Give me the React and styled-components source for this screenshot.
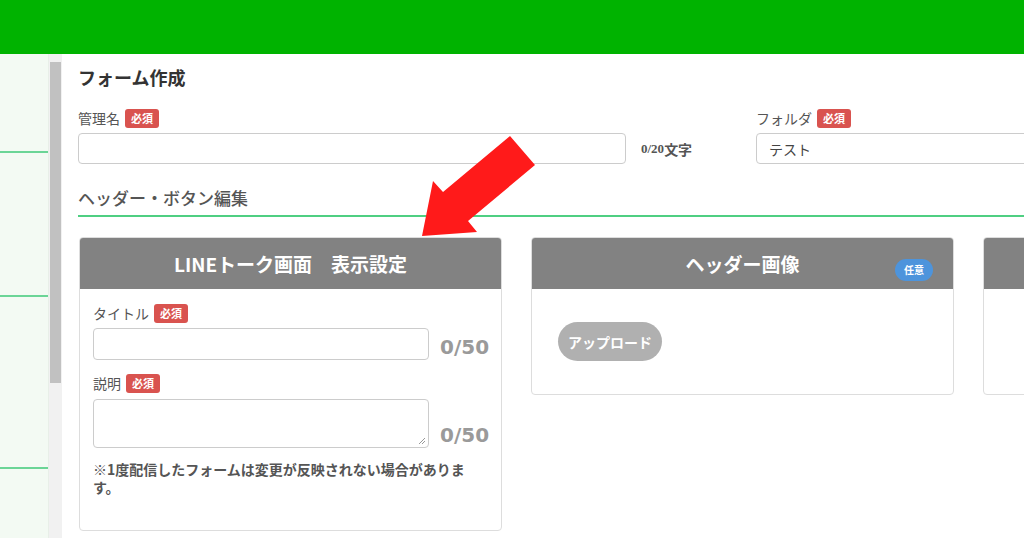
import React from 'react';
import styled, { createGlobalStyle } from 'styled-components';

const GlobalStyle = createGlobalStyle`
  html, body {
    margin: 0;
    padding: 0;
    background: #fff;
    overflow: hidden;
  }
  body {
    font-family: "Noto Sans CJK JP", "Noto Sans", sans-serif;
    color: #555;
  }
  * { box-sizing: border-box; }
`;

const Page = styled.div`
  width: 1024px;
  height: 538px;
  display: flex;
  flex-direction: column;
  position: relative;
  overflow: hidden;
`;

const TopBar = styled.div`
  height: 54px;
  flex: none;
  background: #00b300;
`;

const Body = styled.div`
  flex: 1;
  display: flex;
  min-height: 0;
`;

const Sidebar = styled.div`
  width: 49px;
  flex: none;
  background: #f3faf3;
  border-right: 1px solid #e8efe8;
  display: flex;
  flex-direction: column;
`;

const SideItem = styled.div`
  height: ${p => p.h}px;
  flex: none;
  border-bottom: 2px solid #6bd596;
`;

const ScrollTrack = styled.div`
  width: 13px;
  flex: none;
  background: #f1f1f1;
  padding: 8px 1px 0 1px;
`;

const ScrollThumb = styled.div`
  height: 321px;
  background: #c1c1c1;
`;

const Main = styled.main`
  flex: 1;
  min-width: 0;
  padding: 11px 0 0 16px;
  background: #fff;
`;

const PageTitle = styled.h1`
  margin: 0;
  font-size: 18px;
  line-height: 24px;
  font-weight: 700;
  color: #333;
`;

const TopRow = styled.div`
  display: flex;
  align-items: flex-end;
  margin-top: 19px;
`;

const Field = styled.div`
  width: ${p => p.w}px;
  flex: none;
  display: flex;
  flex-direction: column;
  gap: 5px;
`;

const LabelRow = styled.div`
  display: flex;
  align-items: center;
  gap: 5px;
  height: 20px;
  font-size: 14px;
  color: #555;
`;

const Badge = styled.span`
  display: inline-flex;
  align-items: center;
  justify-content: center;
  height: ${p => (p.pill ? 22 : 19)}px;
  padding: 0 ${p => (p.pill ? 9 : 6)}px;
  border-radius: ${p => (p.pill ? 11 : 3)}px;
  background: ${p => (p.pill ? '#4d94dc' : '#d9534f')};
  color: #fff;
  font-size: ${p => (p.pill ? 10 : 11)}px;
  font-weight: 700;
  line-height: 1;
`;

const TextInput = styled.div`
  height: ${p => p.h || 31}px;
  border: 1px solid #ccc;
  border-radius: 4px;
  background: #fff;
  padding: 0 12px;
  display: flex;
  align-items: center;
  font-size: 14px;
  color: #444;
  position: relative;
`;

const Grip = styled.svg`
  position: absolute;
  right: 2px;
  bottom: 2px;
`;

const SmallCounter = styled.div`
  width: 130px;
  flex: none;
  height: 31px;
  padding-left: 15px;
  display: flex;
  align-items: center;
  font-size: 14px;
  font-weight: 700;
  color: #555;
`;

const Digits = styled.span`
  font-family: "Liberation Serif", serif;
  font-size: 13px;
`;

const SectionTitle = styled.h2`
  margin: 22px 0 0 0;
  font-size: 17px;
  line-height: 24px;
  font-weight: 500;
  color: #555;
  padding-bottom: 5px;
  border-bottom: 2px solid #4fcf82;
`;

const CardRow = styled.div`
  display: flex;
  align-items: flex-start;
  gap: 29px;
  margin-top: 20px;
  padding-left: 1px;
`;

const Card = styled.section`
  width: 423px;
  flex: none;
  border: 1px solid #ddd;
  border-radius: 4px;
  background: #fff;
  overflow: hidden;
`;

const CardHeader = styled.div`
  height: 51px;
  background: #828282;
  color: #fff;
  font-size: 19px;
  font-weight: 700;
  display: flex;
  align-items: center;
  justify-content: center;
  position: relative;
`;

const HeaderBadge = styled.div`
  position: absolute;
  right: 20px;
  top: 14px;
`;

const CardBody = styled.div`
  padding: ${p => p.pad};
  min-height: ${p => p.minH || 0}px;
`;

const BodyField = styled.div`
  display: flex;
  flex-direction: column;
  gap: ${p => p.gap || 5}px;
  & + & {
    margin-top: 13px;
  }
`;

const InputLine = styled.div`
  display: flex;
  align-items: flex-end;
  gap: 11px;
`;

const InputWrap = styled.div`
  width: 336px;
  flex: none;
`;

const BigCounter = styled.div`
  font-family: "DejaVu Sans", sans-serif;
  font-size: 20px;
  font-weight: 700;
  color: #9a9a9a;
  line-height: 22px;
  padding-bottom: 2px;
`;

const Note = styled.p`
  margin: 12px 0 0 0;
  font-size: 14px;
  font-weight: 700;
  line-height: 18px;
  color: #555;
  padding-right: 15px;
`;

const UploadButton = styled.button`
  height: 39px;
  padding: 0 10px;
  border: none;
  border-radius: 20px;
  background: #b0b0b0;
  color: #fff;
  font-family: inherit;
  font-size: 14px;
  font-weight: 700;
`;

const ArrowLayer = styled.svg`
  position: absolute;
  left: 0;
  top: 0;
  pointer-events: none;
`;

export default function App() {
  return (
    <Page>
      <GlobalStyle />
      <TopBar />
      <Body>
        <Sidebar>
          <SideItem h={99} />
          <SideItem h={144} />
          <SideItem h={172} />
        </Sidebar>
        <ScrollTrack>
          <ScrollThumb />
        </ScrollTrack>
        <Main>
          <PageTitle>フォーム作成</PageTitle>
          <TopRow>
            <Field w={548}>
              <LabelRow>管理名<Badge>必須</Badge></LabelRow>
              <TextInput />
            </Field>
            <SmallCounter><Digits>0/20</Digits>文字</SmallCounter>
            <Field w={300}>
              <LabelRow>フォルダ<Badge>必須</Badge></LabelRow>
              <TextInput>テスト</TextInput>
            </Field>
          </TopRow>
          <SectionTitle>ヘッダー・ボタン編集</SectionTitle>
          <CardRow>
            <Card>
              <CardHeader>LINEトーク画面　表示設定</CardHeader>
              <CardBody pad="14px 14px 34px 13px">
                <BodyField>
                  <LabelRow>タイトル<Badge>必須</Badge></LabelRow>
                  <InputLine>
                    <InputWrap><TextInput h={32} /></InputWrap>
                    <BigCounter>0/50</BigCounter>
                  </InputLine>
                </BodyField>
                <BodyField gap={6}>
                  <LabelRow>説明<Badge>必須</Badge></LabelRow>
                  <InputLine>
                    <InputWrap>
                      <TextInput h={49}>
                        <Grip width="8" height="8" viewBox="0 0 8 8">
                          <path d="M7 1L1 7M7 4L4 7" stroke="#999" strokeWidth="1" />
                        </Grip>
                      </TextInput>
                    </InputWrap>
                    <BigCounter>0/50</BigCounter>
                  </InputLine>
                </BodyField>
                <Note>※1度配信したフォームは変更が反映されない場合があります。</Note>
              </CardBody>
            </Card>
            <Card>
              <CardHeader>
                ヘッダー画像
                <HeaderBadge><Badge pill>任意</Badge></HeaderBadge>
              </CardHeader>
              <CardBody pad="33px 26px 33px 26px">
                <UploadButton>アップロード</UploadButton>
              </CardBody>
            </Card>
            <Card>
              <CardHeader />
              <CardBody pad="0" minH={105} />
            </Card>
          </CardRow>
        </Main>
      </Body>
      <ArrowLayer width="1024" height="538" viewBox="0 0 1024 538">
        <polygon
          points="422,236 433,181 443,192 510,136 535,165 468,221 477,232"
          fill="#ff1a1a"
        />
      </ArrowLayer>
    </Page>
  );
}
